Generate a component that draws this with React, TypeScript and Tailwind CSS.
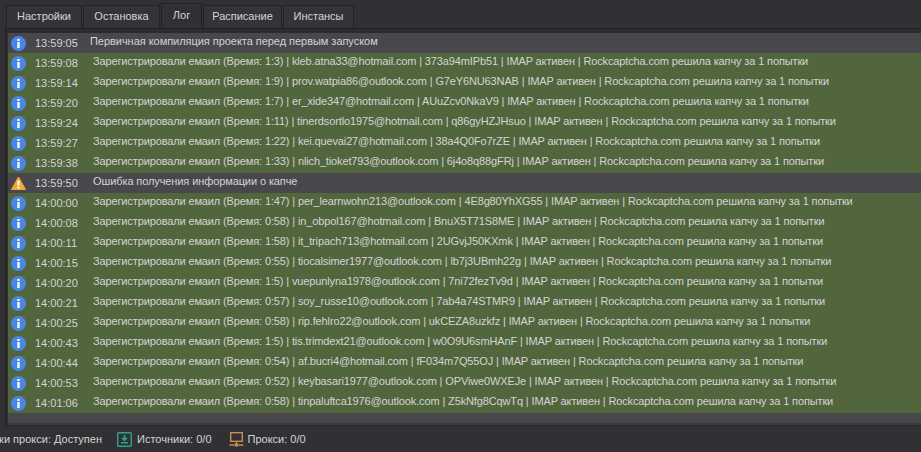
const reg = (time: string, dur: string, email: string, pass: string) => ({
  time,
  kind: "ok",
  text: `Зарегистрировали емаил (Время: ${dur}) | ${email} | ${pass} | IMAP активен | Rockcaptcha.com решила капчу за 1 попытки`,
})

const rows = [
  { time: "13:59:05", kind: "first", text: "Первичная компиляция проекта перед первым запуском" },
  reg("13:59:08", "1:3", "kleb.atna33@hotmail.com", "373a94mIPb51"),
  reg("13:59:14", "1:9", "prov.watpia86@outlook.com", "G7eY6NU63NAB"),
  reg("13:59:20", "1:7", "er_xide347@hotmail.com", "AUuZcv0NkaV9"),
  reg("13:59:24", "1:11", "tinerdsortlo1975@hotmail.com", "q86gyHZJHsuo"),
  reg("13:59:27", "1:22", "kei.quevai27@hotmail.com", "38a4Q0Fo7rZE"),
  reg("13:59:38", "1:33", "nlich_tioket793@outlook.com", "6j4o8q88gFRj"),
  { time: "13:59:50", kind: "warn", text: "Ошибка получения информации о капче" },
  reg("14:00:00", "1:47", "per_learnwohn213@outlook.com", "4E8g80YhXG55"),
  reg("14:00:08", "0:58", "in_obpol167@hotmail.com", "BnuX5T71S8ME"),
  reg("14:00:11", "1:58", "it_tripach713@hotmail.com", "2UGvjJ50KXmk"),
  reg("14:00:15", "0:55", "tiocalsimer1977@outlook.com", "lb7j3UBmh22g"),
  reg("14:00:20", "1:5", "vuepunlyna1978@outlook.com", "7ni72fezTv9d"),
  reg("14:00:21", "0:57", "soy_russe10@outlook.com", "7ab4a74STMR9"),
  reg("14:00:25", "0:58", "rip.fehlro22@outlook.com", "ukCEZA8uzkfz"),
  reg("14:00:43", "1:5", "tis.trimdext21@outlook.com", "w0O9U6smHAnF"),
  reg("14:00:44", "0:54", "af.bucri4@hotmail.com", "fF034m7Q55OJ"),
  reg("14:00:53", "0:52", "keybasari1977@outlook.com", "OPViwe0WXEJe"),
  reg("14:01:06", "0:58", "tinpaluftca1976@outlook.com", "Z5kNfg8CqwTq"),
]

const tabs = [
  { label: "Настройки", w: "w-[76px]" },
  { label: "Остановка", w: "w-[77px]" },
  { label: "Лог", w: "w-[41px]", active: true },
  { label: "Расписание", w: "w-[79px]" },
  { label: "Инстансы", w: "w-[71px]" },
]

function InfoIcon() {
  return (
    <svg width="15" height="15" viewBox="0 0 15 15" className="shrink-0">
      <circle cx="7.5" cy="7.5" r="7.5" fill="#4a86e8" />
      <rect x="6.3" y="3" width="2.4" height="2" fill="#fff" />
      <rect x="6.3" y="6" width="2.4" height="6" fill="#fff" />
    </svg>
  )
}

function WarnIcon() {
  return (
    <svg width="15" height="15" viewBox="0 0 15 15" className="shrink-0">
      <path d="M7.5 1 L14.5 13.5 H0.5 Z" fill="#f5a733" stroke="#f5a733" strokeLinejoin="round" />
      <rect x="6.5" y="4.5" width="2" height="5" fill="#fff" />
      <rect x="6.5" y="10.5" width="2" height="2" fill="#fff" />
    </svg>
  )
}

function SourceIcon() {
  return (
    <svg width="15" height="15" viewBox="0 0 15 15" className="shrink-0" fill="none">
      <rect x="0.7" y="0.7" width="13.6" height="13.6" rx="1" stroke="#2aa58c" strokeWidth="1.4" />
      <path d="M7.5 3 V7.5 M5 5.8 L7.5 8.3 L10 5.8" stroke="#2aa58c" strokeWidth="1.6" />
      <rect x="4" y="10" width="7" height="1.5" fill="#2aa58c" />
    </svg>
  )
}

function ProxyIcon() {
  return (
    <svg width="15" height="15" viewBox="0 0 15 15" className="shrink-0" fill="none">
      <rect x="1.7" y="0.7" width="11.6" height="8.6" stroke="#c58f55" strokeWidth="1.4" />
      <path d="M7.5 10 V12 M0.5 13 H5 M10 13 H14.5" stroke="#c58f55" strokeWidth="1.3" />
      <rect x="5.5" y="11.5" width="4" height="3" fill="#c58f55" />
    </svg>
  )
}

export default function App() {
  return (
    <div
      className="flex h-[452px] w-[921px] flex-col overflow-hidden bg-[#313135] text-[11px] text-[#d4d4d4]"
      style={{ fontFamily: '"Liberation Sans", sans-serif' }}
    >
      <div className="flex h-[28px] items-end gap-px pl-[6px]">
        {tabs.map((tab) => (
          <div
            key={tab.label}
            className={
              tab.active
                ? `flex h-[26px] ${tab.w} mb-[-1px] items-center justify-center border border-b-0 border-[#232326] bg-[#313135] pb-[2px]`
                : `flex h-[23px] ${tab.w} items-center justify-center border border-b-0 border-[#232326] bg-[#343438] pb-[1px]`
            }
          >
            {tab.label}
          </div>
        ))}
      </div>

      <div className="ml-[5px] h-[398px] border-t border-l border-[#232326] bg-[#2c2c30] pt-[4px] pl-[2px]">
        <div className="h-[392px] border-b-[2px] border-[#39393d] bg-[#47474c]">
          {rows.map((row) => (
            <div
              key={row.time}
              className={
                row.kind === "ok"
                  ? "flex h-[20px] items-center whitespace-nowrap bg-[#52663e] pl-[3px]"
                  : "flex h-[20px] items-center whitespace-nowrap bg-[#47474c] pl-[3px]"
              }
            >
              {row.kind === "warn" ? <WarnIcon /> : <InfoIcon />}
              <span className="ml-[9px] w-[58px] shrink-0">{row.time}</span>
              {row.kind === "first" && <span className="mb-[4px] ml-[-3px] tracking-[-0.04px]">{row.text}</span>}
              {row.kind === "warn" && <span className="mb-[4px] tracking-[-0.1px]">{row.text}</span>}
              {row.kind === "ok" && <span className="mb-[4px] tracking-[-0.13px]">{row.text}</span>}
            </div>
          ))}
        </div>
      </div>

      <div className="flex flex-1 items-center whitespace-nowrap">
        <div className="flex w-[102px] justify-end overflow-hidden">
          <span className="shrink-0">Проверки прокси: Доступен</span>
        </div>
        <div className="ml-[15px] flex items-center gap-[5px]">
          <SourceIcon />
          <span>Источники: 0/0</span>
        </div>
        <div className="ml-[17px] flex items-center gap-[4px]">
          <ProxyIcon />
          <span>Прокси: 0/0</span>
        </div>
      </div>
    </div>
  )
}
